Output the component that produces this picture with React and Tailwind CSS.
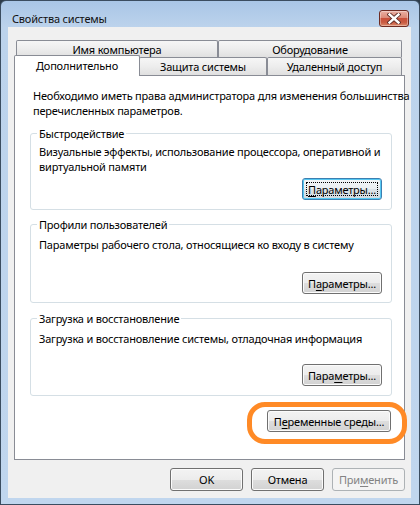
import React from "react";

const FONT = "font-['Noto_Sans',sans-serif] text-[11px] tracking-[-0.2px]";

const btnBase =
  "relative flex items-center justify-center rounded-[3px] border leading-[15px] whitespace-nowrap";
const btnNormal =
  "border-[#707070] bg-[linear-gradient(to_bottom,#f3f3f3_0%,#ececec_50%,#dedede_50%,#d2d2d2_100%)] shadow-[inset_0_0_0_1px_#fbfbfb] text-black";

function Button({ children, className = "", focused = false, disabled = false }) {
  if (disabled) {
    return (
      <div
        className={`${btnBase} border-[#adb2b5] bg-[#f4f4f4] text-[#838383] ${className}`}
      >
        {children}
      </div>
    );
  }
  if (focused) {
    return (
      <div
        className={`${btnBase} border-[#3c7fb1] bg-[linear-gradient(to_bottom,#f3f6f8_0%,#eaeef1_50%,#dde3e8_50%,#d3dbe1_100%)] shadow-[inset_0_0_0_1px_#56c8f2] text-black ${className}`}
      >
        <div className="absolute inset-[3px] border border-dotted border-black" />
        {children}
      </div>
    );
  }
  return <div className={`${btnBase} ${btnNormal} ${className}`}>{children}</div>;
}

function U({ children }) {
  return <span className="underline underline-offset-[2px] decoration-1">{children}</span>;
}

const tabBg =
  "border border-b-0 border-[#898c95] rounded-t-[2px] bg-[linear-gradient(to_bottom,#f6f6f6_0%,#ededed_50%,#e0e0e0_100%)]";

function Group({ label, className = "", children }) {
  return (
    <div className={`relative rounded-[3px] border border-[#d5dfe5] ${className}`}>
      <span className="absolute left-[6px] top-[-8px] bg-white px-[2px] leading-[15px]">
        {label}
      </span>
      {children}
    </div>
  );
}

function CloseButton() {
  return (
    <div className="mt-[9px] flex h-[17px] w-[30px] items-center justify-center rounded-[3px] border border-[#6e2b22] bg-[linear-gradient(to_bottom,#eab0a3_0%,#dc8a78_45%,#c9513b_50%,#c85a41_75%,#dd8a6a_100%)] shadow-[inset_0_0_0_1px_rgba(255,255,255,0.35)]">
      <svg width="14" height="11" viewBox="0 0 14 11">
        <path
          d="M2.5 1.5 L11.5 9.5 M11.5 1.5 L2.5 9.5"
          stroke="#5a2a24"
          strokeWidth="4.2"
          strokeLinecap="square"
          fill="none"
        />
        <path
          d="M2.5 1.5 L11.5 9.5 M11.5 1.5 L2.5 9.5"
          stroke="#ffffff"
          strokeWidth="2.4"
          strokeLinecap="square"
          fill="none"
        />
      </svg>
    </div>
  );
}

export default function App() {
  return (
    <div className={`relative h-[505px] w-[420px] bg-[#2d3c4a] text-black ${FONT}`}>
      <div className="flex h-[505px] w-[420px] flex-col rounded-t-[6px] border border-[#3b4d60] bg-[linear-gradient(to_bottom,#a9c6e6_0px,#bcd3ec_26px,#c0d6ee_100%)]">
        {/* Title bar */}
        <div className="flex h-[26px] items-start justify-between pl-[11px] pr-[10px]">
          <span className="mt-[10px] leading-[15px] text-[#111]">Свойства системы</span>
          <CloseButton />
        </div>

        {/* Client area */}
        <div className="mb-[6px] ml-[7px] mr-[8px] flex flex-1 flex-col bg-[#f0f0f0] px-[6px] pt-[13px]">
          {/* Tab row 1 */}
          <div className="flex h-[17px] pl-[2px]">
            <div className={`flex w-[202px] justify-center pt-[1px] leading-[15px] ${tabBg}`}>
              Имя компьютера
            </div>
            <div className={`flex w-[184px] justify-center pt-[1px] leading-[15px] ${tabBg}`}>
              Оборудование
            </div>
          </div>
          {/* Tab row 2 */}
          <div className="relative z-10 mt-[-2px] flex h-[20px] items-end">
            <div className="relative z-20 mb-[-1px] flex h-[21px] w-[126px] justify-center rounded-t-[2px] border border-b-0 border-[#898c95] bg-white pt-[2px] leading-[15px]">
              Дополнительно
            </div>
            <div className={`ml-[-1px] flex h-[18px] w-[128px] justify-center pt-[1px] leading-[15px] ${tabBg}`}>
              Защита системы
            </div>
            <div className={`flex h-[18px] w-[135px] justify-center pt-[1px] leading-[15px] ${tabBg}`}>
              Удаленный доступ
            </div>
          </div>

          {/* Tab panel */}
          <div className="flex h-[385px] flex-col border border-[#898c95] bg-white pl-[15px] pr-[12px] pt-[12px] leading-[15px]">
            <p className="ml-[3px] whitespace-nowrap">
              Необходимо иметь права администратора для изменения большинства
              <br />
              перечисленных параметров.
            </p>

            <Group label="Быстродействие" className="mt-[15px] pb-[9px] pt-[10px]">
              <p className="whitespace-nowrap pl-[8px]">
                Визуальные эффекты, использование процессора, оперативной и
                <br />
                виртуальной памяти
              </p>
              <div className="mt-[4px] flex justify-end pr-[9px]">
                <Button focused className="h-[22px] w-[80px]">
                  <U>П</U>араметры...
                </Button>
              </div>
            </Group>

            <Group label="Профили пользователей" className="mt-[14px] pb-[8px] pt-[12px]">
              <p className="whitespace-nowrap pl-[8px]">
                Параметры рабочего стола, относящиеся ко входу в систему
              </p>
              <div className="mt-[20px] flex justify-end pr-[9px]">
                <Button className="h-[22px] w-[80px]">
                  П<U>а</U>раметры...
                </Button>
              </div>
            </Group>

            <Group label="Загрузка и восстановление" className="mt-[15px] pb-[9px] pt-[12px]">
              <p className="whitespace-nowrap pl-[8px]">
                Загрузка и восстановление системы, отладочная информация
              </p>
              <div className="mt-[18px] flex justify-end pr-[9px]">
                <Button className="h-[22px] w-[80px]">
                  Пара<U>м</U>етры...
                </Button>
              </div>
            </Group>

            <div className="mt-[14px] flex justify-end pr-[1px]">
              <Button className="h-[22px] w-[124px]">
                П<U>е</U>ременные среды...
              </Button>
            </div>
          </div>

          {/* Dialog buttons */}
          <div className="mt-[8px] flex justify-end gap-[8px]">
            <Button className="h-[23px] w-[73px]">OK</Button>
            <Button className="h-[23px] w-[73px]">Отмена</Button>
            <Button disabled className="h-[23px] w-[73px]">
              При<U>м</U>енить
            </Button>
          </div>
        </div>
      </div>

      {/* Orange highlight annotation */}
      <div className="pointer-events-none absolute left-[247px] top-[402px] h-[42px] w-[160px] rounded-[18px] border-[5px] border-[#ff8a26]" />
    </div>
  );
}
